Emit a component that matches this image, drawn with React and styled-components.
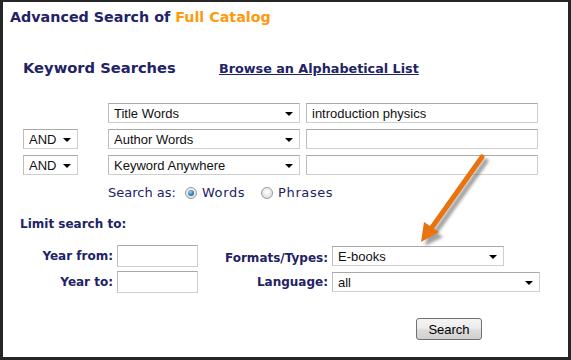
import React from "react";
import styled, { createGlobalStyle } from "styled-components";

const Global = createGlobalStyle`
  html, body { margin: 0; padding: 0; background: #fff; }
  body { font-family: "DejaVu Sans", Verdana, sans-serif; }
`;

const NAVY = "#222266";

const Frame = styled.div`
  position: relative;
  box-sizing: border-box;
  width: 571px;
  height: 360px;
  border: 3px solid #262626;
  border-top-width: 2px;
  padding: 6px 0 0 7px;
  background: #fff;
  color: ${NAVY};
`;

const Title = styled.h1`
  margin: 0;
  font-size: 14.3px;
  font-weight: bold;
  line-height: 18px;
  color: ${NAVY};
`;

const Orange = styled.span`
  color: #ff9a0e;
`;

const HeaderRow = styled.div`
  display: flex;
  align-items: baseline;
  margin: 32px 0 0 13px;
`;

const SectionTitle = styled.h2`
  margin: 0;
  font-size: 14.7px;
  font-weight: bold;
  width: 196px;
  line-height: 20px;
`;

const BrowseLink = styled.a`
  font-size: 12.75px;
  font-weight: bold;
  color: ${NAVY};
  text-decoration: underline;
`;

const SearchGrid = styled.div`
  display: grid;
  grid-template-columns: 79px 192px 232px;
  column-gap: 6px;
  row-gap: 6px;
  margin: 25px 0 0 13px;
`;

const Box = styled.div`
  box-sizing: border-box;
  height: ${(p) => p.$h || 20}px;
  width: ${(p) => (p.$w ? p.$w + "px" : "auto")};
  justify-self: ${(p) => (p.$w ? "start" : "stretch")};
  border: 1px solid #cfcfcf;
  border-top-color: #a9a9a9;
  border-left-color: #bdbdbd;
  background: #fff;
  display: flex;
  align-items: center;
  padding: 0 6px 0 5px;
  font-family: "Liberation Sans", Arial, sans-serif;
  font-size: 13px;
  color: #111;
  white-space: nowrap;
`;

const SelText = styled.span`
  flex: 1;
  overflow: hidden;
`;

const Arrow = styled.span`
  width: 0;
  height: 0;
  border-left: 4px solid transparent;
  border-right: 4px solid transparent;
  border-top: 4px solid #000;
  margin-top: 1px;
`;

const Empty = styled.span``;

function Select({ value, w, h }) {
  return (
    <Box $w={w} $h={h}>
      <SelText>{value}</SelText>
      <Arrow />
    </Box>
  );
}

const SearchAsRow = styled.div`
  display: flex;
  align-items: center;
  margin: 10px 0 0 98px;
  font-size: 13px;
  line-height: 16px;
  color: ${NAVY};
`;

const RadioLabel = styled.span`
  display: inline-flex;
  align-items: center;
  margin-left: ${(p) => p.$ml}px;
  gap: 4px;
  letter-spacing: 0.6px;
`;

const Radio = styled.span`
  box-sizing: border-box;
  width: 12px;
  height: 12px;
  border-radius: 50%;
  border: 1px solid #9a9a9a;
  background: radial-gradient(circle at 50% 40%, #ffffff 0%, #e6e6e6 60%, #cfcfcf 100%);
  display: inline-flex;
  align-items: center;
  justify-content: center;
  margin-right: 1px;
  &::after {
    content: "";
    display: ${(p) => (p.$on ? "block" : "none")};
    width: 6px;
    height: 6px;
    border-radius: 50%;
    background: radial-gradient(circle at 40% 35%, #9fd6f5 0%, #2a7fbf 55%, #0c3e6e 100%);
  }
`;

const LimitTitle = styled.div`
  margin: 15px 0 0 10px;
  font-size: 12px;
  font-weight: bold;
  line-height: 16px;
`;

const LimitGrid = styled.div`
  display: grid;
  grid-template-columns: 103px 81px 126px auto;
  column-gap: 4px;
  row-gap: 4px;
  align-items: center;
  margin: 13px 0 0 0;
`;

const Label = styled.label`
  font-size: 12px;
  font-weight: bold;
  text-align: right;
  line-height: 16px;
  margin-top: ${(p) => p.$mt || 0}px;
`;

const ButtonRow = styled.div`
  display: flex;
  margin: 25px 0 0 406px;
`;

const Button = styled.button`
  box-sizing: border-box;
  width: 66px;
  height: 22px;
  border: 1px solid #707070;
  border-radius: 3px;
  background: linear-gradient(#f4f4f4 0%, #ececec 45%, #dcdcdc 55%, #d0d0d0 100%);
  font-family: "Liberation Sans", Arial, sans-serif;
  font-size: 13px;
  color: #000;
  padding: 0;
`;

const ArrowOverlay = styled.svg`
  position: absolute;
  left: 0;
  top: 0;
  pointer-events: none;
`;

export default function App() {
  return (
    <>
      <Global />
      <Frame>
        <Title>
          Advanced Search of <Orange>Full Catalog</Orange>
        </Title>
        <HeaderRow>
          <SectionTitle>Keyword Searches</SectionTitle>
          <BrowseLink href="#">Browse an Alphabetical List</BrowseLink>
        </HeaderRow>
        <SearchGrid>
          <Empty />
          <Select value="Title Words" />
          <Box>introduction physics</Box>
          <Select value="AND" w={55} />
          <Select value="Author Words" />
          <Box />
          <Select value="AND" w={55} />
          <Select value="Keyword Anywhere" />
          <Box />
        </SearchGrid>
        <SearchAsRow>
          Search as:
          <RadioLabel $ml={9}>
            <Radio $on />
            Words
          </RadioLabel>
          <RadioLabel $ml={16}>
            <Radio />
            Phrases
          </RadioLabel>
        </SearchAsRow>
        <LimitTitle>Limit search to:</LimitTitle>
        <LimitGrid>
          <Label>Year from:</Label>
          <Box $h={22} />
          <Label $mt={4}>Formats/Types:</Label>
          <Select value="E-books" w={172} />
          <Label>Year to:</Label>
          <Box $h={22} />
          <Label>Language:</Label>
          <Select value="all" w={208} />
        </LimitGrid>
        <ButtonRow>
          <Button>Search</Button>
        </ButtonRow>
        <ArrowOverlay width="571" height="360" viewBox="0 0 571 360">
          <defs>
            <filter id="sh" x="-20%" y="-20%" width="140%" height="140%">
              <feGaussianBlur stdDeviation="1.6" />
            </filter>
          </defs>
          <g transform="translate(-3,-2)">
            <g opacity="0.55" filter="url(#sh)" transform="translate(4,4)">
              <line x1="482" y1="157" x2="428" y2="233" stroke="#555" strokeWidth="5" strokeLinecap="round" />
              <polygon points="421,242 425,223 439,233" fill="#555" />
            </g>
            <line x1="482" y1="157" x2="428" y2="233" stroke="#e8730f" strokeWidth="5" strokeLinecap="round" />
            <polygon points="421,242 424,222 439,232" fill="#e8730f" />
          </g>
        </ArrowOverlay>
      </Frame>
    </>
  );
}
